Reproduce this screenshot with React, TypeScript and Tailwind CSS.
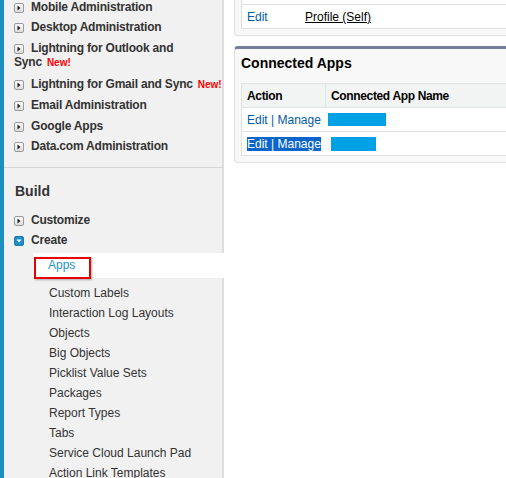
import React from "react";

const ArrowIcon = ({ open = false }: { open?: boolean }) =>
  open ? (
    <span className="inline-flex items-center justify-center w-[10px] h-[10px] mr-[7px] rounded-[2px] bg-[#1f8fc4] border border-[#1a7fb0] align-[-1px] tracking-normal">
      <svg width="8" height="8" viewBox="0 0 8 8">
        <path d="M1.5 2.5 L6.5 2.5 L4 5.5 Z" fill="#ffffff" />
      </svg>
    </span>
  ) : (
    <span className="inline-flex items-center justify-center w-[10px] h-[10px] mr-[7px] rounded-[2px] bg-gradient-to-b from-[#ffffff] to-[#dcdcdc] border border-[#9a9a9a] align-[-1px] tracking-normal">
      <svg width="8" height="8" viewBox="0 0 8 8">
        <path d="M2.5 1.5 L5.5 4 L2.5 6.5 Z" fill="#222222" />
      </svg>
    </span>
  );

const NewBadge = () => (
  <span className="ml-[5px] text-[10px] font-bold text-[#ff0000] tracking-normal">New!</span>
);

const topItems = [
  "Mobile Administration",
  "Desktop Administration",
  "Lightning for Outlook and Sync",
  "Lightning for Gmail and Sync",
  "Email Administration",
  "Google Apps",
  "Data.com Administration",
];

const subItems = [
  "Custom Labels",
  "Interaction Log Layouts",
  "Objects",
  "Big Objects",
  "Picklist Value Sets",
  "Packages",
  "Report Types",
  "Tabs",
  "Service Cloud Launch Pad",
  "Action Link Templates",
];

export default function App() {
  return (
    <div className="w-[506px] h-[478px] overflow-hidden flex bg-white font-['Liberation_Sans',Arial,sans-serif] text-[#333]">
      <div className="w-[4px] shrink-0 bg-[#1a8fc0]" />
      <aside className="w-[220px] shrink-0 flex flex-col">
        <div className="bg-[#f1f1f1] border-r-2 border-r-[#dedede] border-b border-b-[#d6d6d6] pb-[10px]">
          <ul className="-mt-[3.5px]">
            {topItems.map((t) => {
              const isNew = t.endsWith("and Sync");
              const head = isNew ? t.slice(0, -5) : t;
              return (
                <li
                  key={t}
                  className="pl-[10px] py-[3px] leading-[14.5px] text-[12px] tracking-[-0.2px] font-bold text-[#333]"
                >
                  <ArrowIcon />
                  {isNew ? (
                    <>
                      {head + " "}
                      <span className="whitespace-nowrap">
                        Sync
                        <NewBadge />
                      </span>
                    </>
                  ) : (
                    head
                  )}
                </li>
              );
            })}
          </ul>
        </div>
        <div className="h-[2px] bg-white" />
        <div className="flex-1 bg-[#f1f1f1] border-r-2 border-r-[#dedede] pt-[14px]">
          <h2 className="pl-[11px] text-[14px] leading-[18px] font-bold text-[#333]">Build</h2>
          <ul className="mt-[10px]">
            <li className="pl-[10px] py-[3px] leading-[14px] text-[12px] tracking-[-0.2px] font-bold">
              <ArrowIcon />
              Customize
            </li>
            <li className="pl-[10px] py-[3px] leading-[14px] text-[12px] tracking-[-0.2px] font-bold">
              <ArrowIcon open />
              Create
            </li>
          </ul>
          <div className="relative ml-[29px] -mr-[2px] mt-[3px] mb-[5px] h-[25px] bg-white pl-[15px] leading-[25px] text-[12px] text-[#1f94d0]">
            Apps
            <div className="absolute left-[1px] top-[4px] w-[57px] h-[22px] border-2 border-[#e60000] shadow-[1px_1px_2px_rgba(0,0,0,0.3)]" />
          </div>
          <ul>
            {subItems.map((s) => (
              <li key={s} className="pl-[45px] leading-[20px] text-[12px] text-[#333]">
                {s}
              </li>
            ))}
          </ul>
        </div>
      </aside>
      <div className="w-[10px] shrink-0" />
      <main className="flex-1 min-w-0 text-[12px]">
        <div className="bg-[#f8f8f8] border-l border-b border-[#e0e0e0] rounded-bl-[4px] pl-[6px] pb-[6px]">
          <div className="bg-white border-l border-[#e0e0e0]">
            <div className="h-[5px] border-b border-[#e0e0e0]" />
            <div className="h-[24px] border-b border-[#e0e0e0] flex items-center pl-[5px]">
              <span className="w-[58px] text-[#015ba7]">Edit</span>
              <span className="text-[#000] underline">Profile (Self)</span>
            </div>
          </div>
        </div>
        <div className="mt-[10px] bg-[#f8f8f8] border-t-[3px] border-t-[#747e96] border-l border-b border-l-[#e0e0e0] border-b-[#e0e0e0] rounded-tl-[4px] rounded-bl-[4px] pl-[6px] pb-[6px]">
          <h3 className="pt-[5px] pb-[11px] leading-[18px] text-[14px] font-bold text-[#000]">
            Connected Apps
          </h3>
          <div className="bg-white border-t border-l border-[#e0e3e5]">
            <div className="h-[24px] flex bg-[#f2f3f3] border-b border-[#e0e3e5] text-[12px] tracking-[-0.35px] font-bold text-[#000]">
              <div className="w-[84px] border-r border-[#e0e3e5] pl-[5px] flex items-center">Action</div>
              <div className="pl-[5px] flex items-center">Connected App Name</div>
            </div>
            <div className="h-[24px] flex border-b border-[#e0e3e5]">
              <div className="w-[84px] pl-[5px] flex items-center text-[#015ba7] whitespace-nowrap">
                Edit | Manage
              </div>
              <div className="pl-[5px] flex items-center">
                <div className="-ml-[3px] w-[58px] h-[13px] bg-[#00a1e4]" />
              </div>
            </div>
            <div className="h-[24px] flex border-b border-[#e0e3e5]">
              <div className="w-[84px] pl-[5px] flex items-center whitespace-nowrap">
                <span className="bg-[#0b66cc] text-white leading-[14px]">Edit | Manage</span>
              </div>
              <div className="pl-[5px] flex items-center">
                <div className="w-[45px] h-[14px] bg-[#00a1e4]" />
              </div>
            </div>
          </div>
        </div>
      </main>
    </div>
  );
}
